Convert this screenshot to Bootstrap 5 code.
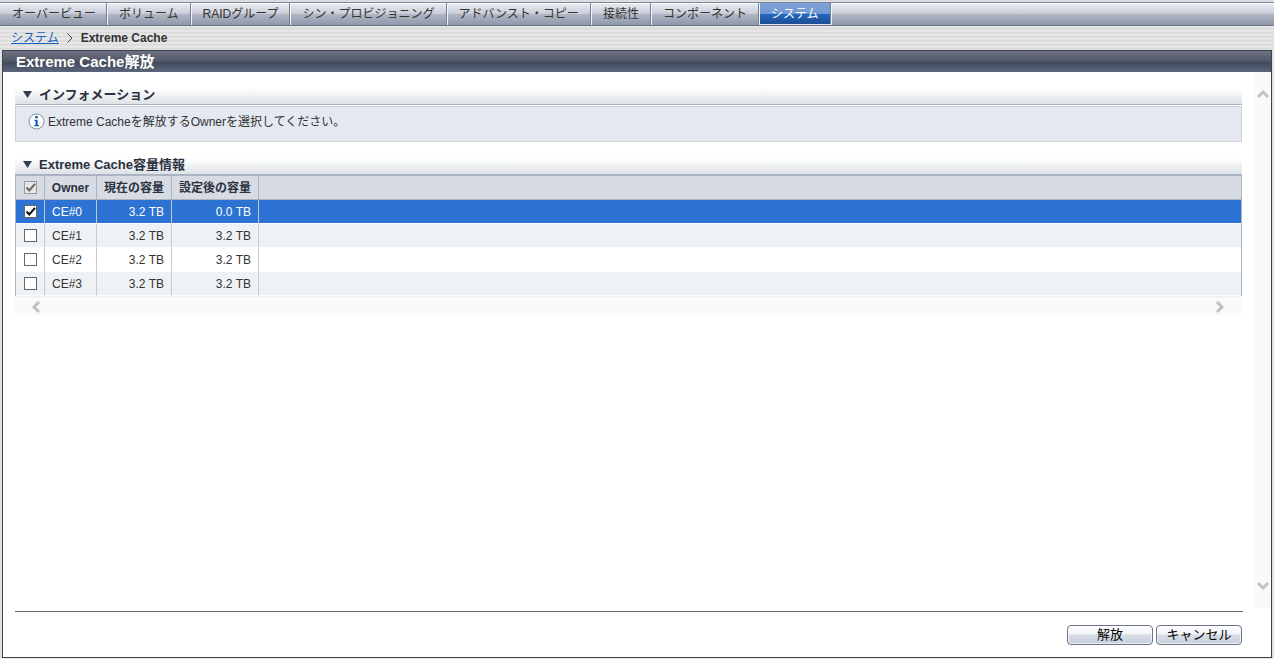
<!DOCTYPE html>
<html lang="ja">
<head>
<meta charset="utf-8">
<meta name="viewport" content="width=device-width, initial-scale=1">
<title>Extreme Cache解放</title>
<link href="https://cdn.jsdelivr.net/npm/bootstrap@5.3.0/dist/css/bootstrap.min.css" rel="stylesheet">
<style>
body{font-family:"Liberation Sans","Noto Sans CJK JP",sans-serif;font-size:12px;line-height:20px;color:#333;
  background:repeating-linear-gradient(#dadada 0 1px,#e0e0e0 1px 2px,#e6e6e6 2px 4px)}
/* global tabs */
.main-tabs{margin-top:2px;border-top:1px solid #7a8699;border-bottom:1px solid #6d7687;
  background:linear-gradient(#fff 0 1px,#e6e9f0 1px,#c9ccd6 11px,#b2b7c5 11px,#8f98ab 22px);height:24px}
.main-tabs a{display:block;height:22px;padding:0 11px;line-height:22px;border-left:1px solid #f4f5f8;border-right:1px solid #77829a;color:#333;text-decoration:none;white-space:nowrap}
.main-tabs li:first-child a{border-left:0;padding:0 10px 0 12px}
.main-tabs li:last-child{border-right:1px solid #f4f5f8}
.main-tabs a.active{color:#fff;background:linear-gradient(#7fa3d8 0,#7199d2 11px,#2468c0 11px,#1d4f94 21px);border-bottom:1px solid #e1e4ea}
/* breadcrumb */
.crumbs{height:24px;padding:0 11px}
.crumbs a{color:#1862bd}
.panel{margin:0 2px 1px;border:1px solid #3b414d;background:#fff}
.panel-title{height:21px;padding-left:13px;font-size:15px;line-height:21px;font-weight:700;color:#fff;
  background:linear-gradient(#6b7284 0,#505562 11px,#3e495b 11px,#5b657b 21px)}
.content-area{padding:12px 12px 0}
.sec-head{height:21px;margin:0;padding-left:8px;font-size:13px;line-height:21px;font-weight:700;color:#2b3140;
  background:linear-gradient(#fff 4px,#dde2e6);border-bottom:1px solid #a9b3c1}
.sec-head svg{width:9px;height:7px;margin-right:7px}
.notice{margin-top:1px;height:36px;padding:5px 12px;border:1px solid #d0d0d0;background:#e4e8f1}
.notice svg{width:17px;height:17px;margin:1px 3px 0 0}
/* capacity table */
.cap-section{margin-top:12px}
.cap-table{table-layout:fixed;width:100%;border:1px solid #a9b3c1;border-bottom:0;border-collapse:separate;border-spacing:0;line-height:22px}
.cap-table th,.cap-table td{height:24px;padding:0 7px;border-right:1px solid #c3c9d1;white-space:nowrap}
.cap-table th{padding:0 6px;color:#2b3140;background:#d7dce4;border-bottom:1px solid #a9b3c1;border-right-color:#a9b3c1;text-align:center}
.cap-table td{border-bottom:1px solid #fff}
.cap-table th:last-child,.cap-table td:last-child{border-right:0}
.cap-table tr:nth-child(even) td{background:#eef2f5}
.cap-table tr.chosen td{background:#2d73d3;color:#fff}
.c-check{width:29px}.c-owner{width:52px}.c-now{width:75px}.c-after{width:87px}
.tick{appearance:none;display:block;width:13px;height:13px;margin:0 auto;border:1px solid #666;background:#fff}
.tick:checked{background:#fff url("data:image/svg+xml,%3Csvg xmlns='http://www.w3.org/2000/svg' viewBox='0 0 11 11'%3E%3Cpath d='M1.5 5.5L4.3 8.5L10 1.8' fill='none' stroke='%23111' stroke-width='2'/%3E%3C/svg%3E")}
.tick:disabled{border-color:#999;background-color:#e6e6e6;opacity:1;background-image:url("data:image/svg+xml,%3Csvg xmlns='http://www.w3.org/2000/svg' viewBox='0 0 11 11'%3E%3Cpath d='M1.5 5.5L4.3 8.5L10 1.8' fill='none' stroke='%23666' stroke-width='2'/%3E%3C/svg%3E")}
.hbar{height:19px;padding:2px 16px 0 15px;border-top:1px solid #efefef;background:#f9f9f9}
.vbar{width:17px;padding:16px 0;background:#f9f9f9}
.hbar svg,.vbar svg{width:12px;height:12px;fill:none;stroke:#c1c1c1;stroke-width:3}
.foot{margin:3px 28px 0 12px;padding:13px 1px 12px;border-top:1px solid #666;gap:3px}
.push-btn{width:86px;height:20px;padding:0;border:1px solid #6d7488;border-radius:4px;font-size:13px;line-height:18px;color:#000;
  background:linear-gradient(#fff 0,#f2f4f7 8px,#d7dde6 9px,#c9d1dd);box-shadow:inset 0 0 0 1px #ffffff99}
</style>
</head>
<body class="min-vh-100 d-flex flex-column">
<nav class="main-tabs">
  <ul class="list-unstyled d-flex mb-0">
    <li><a href="#">オーバービュー</a></li>
    <li><a href="#">ボリューム</a></li>
    <li><a href="#">RAIDグループ</a></li>
    <li><a href="#">シン・プロビジョニング</a></li>
    <li><a href="#">アドバンスト・コピー</a></li>
    <li><a href="#">接続性</a></li>
    <li><a href="#">コンポーネント</a></li>
    <li><a href="#" class="active" aria-current="page">システム</a></li>
  </ul>
</nav>
<nav class="crumbs d-flex align-items-center" aria-label="breadcrumb">
  <a href="#">システム</a>
  <svg class="mx-2" width="6" height="10" viewBox="0 0 6 10" fill="none" stroke="#444" aria-hidden="true"><path d="M.5 .5L5 5L.5 9.500"/></svg>
  <strong>Extreme Cache</strong>
</nav>
<main class="panel flex-grow-1 d-flex flex-column">
  <h1 class="panel-title mb-0">Extreme Cache解放</h1>
  <div class="d-flex flex-grow-1">
    <div class="content-area flex-grow-1">
      <section>
        <h2 class="sec-head d-flex align-items-center"><svg viewBox="0 0 9 7" aria-hidden="true"><path d="M0 0H9L4.500 7Z" fill="#333f52"/></svg>インフォメーション</h2>
        <div class="notice d-flex align-items-start">
          <svg viewBox="0 0 17 17" aria-hidden="true"><circle cx="8.500" cy="8.500" r="7.500" fill="#fff" stroke="#858b94"/><circle cx="8.500" cy="4.200" r="1.400" fill="#1b5fb8"/><path d="M6.300 6.800H9.700V12H11V13.200H6.300V12H7.500V8H6.300Z" fill="#1b5fb8"/></svg>
          <span>Extreme Cacheを解放するOwnerを選択してください。</span>
        </div>
      </section>
      <section class="cap-section">
        <h2 class="sec-head d-flex align-items-center"><svg viewBox="0 0 9 7" aria-hidden="true"><path d="M0 0H9L4.500 7Z" fill="#333f52"/></svg>Extreme Cache容量情報</h2>
        <table class="cap-table">
          <colgroup><col class="c-check"><col class="c-owner"><col class="c-now"><col class="c-after"><col></colgroup>
          <thead><tr><th><input class="tick" type="checkbox" checked disabled aria-label="すべて選択"></th><th>Owner</th><th>現在の容量</th><th>設定後の容量</th><th></th></tr></thead>
          <tbody>
            <tr class="chosen"><td><input class="tick" type="checkbox" checked aria-label="CE#0"></td><td>CE#0</td><td class="text-end">3.2 TB</td><td class="text-end">0.0 TB</td><td></td></tr>
            <tr><td><input class="tick" type="checkbox" aria-label="CE#1"></td><td>CE#1</td><td class="text-end">3.2 TB</td><td class="text-end">3.2 TB</td><td></td></tr>
            <tr><td><input class="tick" type="checkbox" aria-label="CE#2"></td><td>CE#2</td><td class="text-end">3.2 TB</td><td class="text-end">3.2 TB</td><td></td></tr>
            <tr><td><input class="tick" type="checkbox" aria-label="CE#3"></td><td>CE#3</td><td class="text-end">3.2 TB</td><td class="text-end">3.2 TB</td><td></td></tr>
          </tbody>
        </table>
        <div class="hbar d-flex justify-content-between align-items-center" aria-hidden="true">
          <svg viewBox="0 0 12 12"><path d="M9 1L4 6L9 11"/></svg>
          <svg viewBox="0 0 12 12"><path d="M3 1L8 6L3 11"/></svg>
        </div>
      </section>
    </div>
    <div class="vbar flex-shrink-0 d-flex flex-column justify-content-between align-items-center" aria-hidden="true">
      <svg viewBox="0 0 12 12"><path d="M1 9L6 4L11 9"/></svg>
      <svg viewBox="0 0 12 12"><path d="M1 3L6 8L11 3"/></svg>
    </div>
  </div>
  <div class="foot d-flex justify-content-end">
    <button type="button" class="push-btn">解放</button>
    <button type="button" class="push-btn">キャンセル</button>
  </div>
</main>
<script src="https://cdn.jsdelivr.net/npm/bootstrap@5.3.0/dist/js/bootstrap.bundle.min.js"></script>
</body>
</html>
